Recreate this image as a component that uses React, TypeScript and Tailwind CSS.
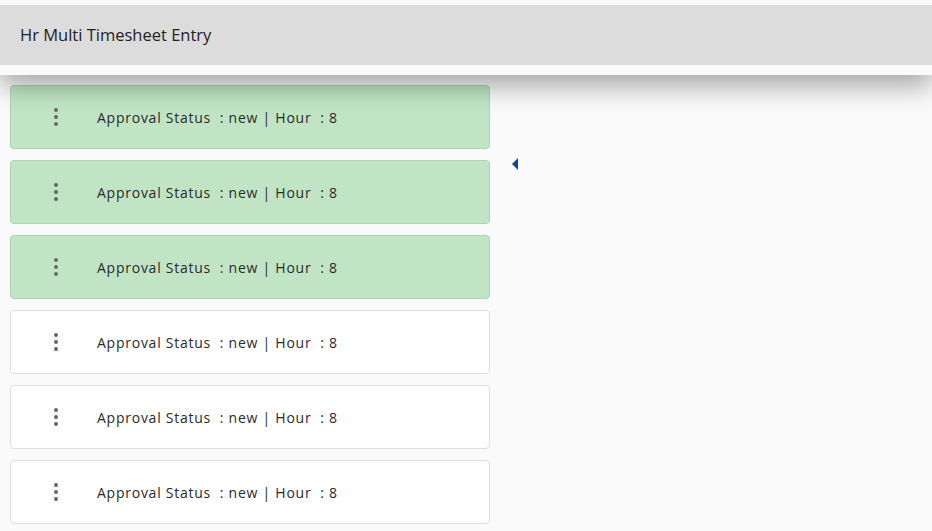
const rows = [
  { done: true },
  { done: true },
  { done: true },
  { done: false },
  { done: false },
  { done: false },
];

function Dots() {
  return (
    <div className="flex flex-col gap-[3px]">
      <span className="block w-[4px] h-[4px] rounded-full bg-[#666]" />
      <span className="block w-[4px] h-[4px] rounded-full bg-[#666]" />
      <span className="block w-[4px] h-[4px] rounded-full bg-[#666]" />
    </div>
  );
}

export default function App() {
  return (
    <div className="min-h-screen bg-[#fafafa] overflow-hidden">
      {/* Title bar */}
      <div className="relative z-10 bg-[#fafafa] pt-[5px] pb-[10px] shadow-[0_12px_26px_rgba(0,0,0,0.32)]">
        <div
          className="h-[60px] bg-[#dcdcdc] flex items-center pl-[20px] text-[16.5px] text-[#222]"
          style={{ fontFamily: '"Open Sans", "Noto Sans", sans-serif' }}
        >
          Hr Multi Timesheet Entry
        </div>
      </div>

      <div className="flex">
        {/* Entry list */}
        <div className="flex flex-col gap-[11px] pt-[10px] pl-[10px] w-[490px]">
          {rows.map((r, i) => (
            <div
              key={i}
              className={
                r.done
                  ? "h-[64px] rounded-[4px] border border-[#a9d6ad] bg-[#c1e5c4] flex items-center pl-[43px]"
                  : "h-[64px] rounded-[4px] border border-[#dedede] bg-white flex items-center pl-[43px]"
              }
            >
              <Dots />
              <span
                className="ml-[39px] whitespace-pre text-[14px] text-[#2a2a2a] tracking-[0.75px]"
                style={{ fontFamily: '"Open Sans", sans-serif' }}
              >
                {"Approval Status  : new | Hour  : 8"}
              </span>
            </div>
          ))}
        </div>

        {/* Collapse toggle */}
        <div className="pt-[83px] pl-[22px]">
          <svg width="6" height="12" viewBox="0 0 6 12">
            <path d="M6 0 L0 6 L6 12 Z" fill="#0d47a1" />
          </svg>
        </div>
      </div>
    </div>
  );
}
